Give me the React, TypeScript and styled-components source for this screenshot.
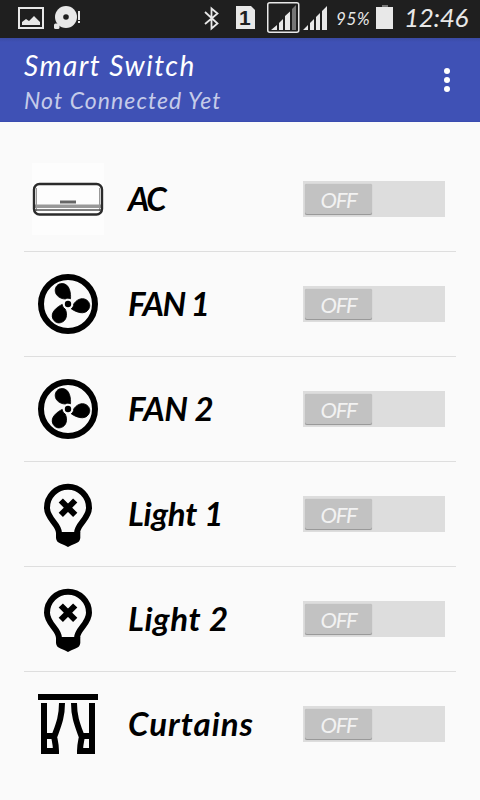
import React from "react";
import styled, { createGlobalStyle } from "styled-components";

const Global = createGlobalStyle`
  * { box-sizing: border-box; }
  body { margin: 0; background: #fafafa; font-family: Lato, "Open Sans", sans-serif; font-style: italic; }
`;

const Screen = styled.div`
  width: 480px;
  height: 800px;
  display: flex;
  flex-direction: column;
  background: #fafafa;
  overflow: hidden;
`;

const StatusBar = styled.header`
  height: 38px;
  flex: none;
  display: flex;
  justify-content: space-between;
  background: #1f1f1f;
  color: #e8e8e8;
  svg { display: block; flex: none; }
`;

const StatusGroup = styled.div`
  display: flex;
`;

const Battery = styled.span`
  width: 40px;
  padding-left: 1px;
  font-size: 17px;
  line-height: 37px;
  letter-spacing: 0.6px;
`;

const Clock = styled.span`
  width: 81px;
  padding-left: 5px;
  font-size: 26px;
  line-height: 34px;
  letter-spacing: -0.3px;
`;

const AppBar = styled.div`
  height: 84px;
  flex: none;
  display: flex;
  justify-content: space-between;
  align-items: center;
  padding: 0 24px;
  background: linear-gradient(#3a4aa4, #3f51b5 4px);
  border-bottom: 1px solid #3a4cb0;
`;

const Titles = styled.div`
  display: flex;
  flex-direction: column;
  padding-top: 5px;
`;

const Title = styled.div`
  font-size: 28px;
  line-height: 36px;
  letter-spacing: 1.5px;
  color: #fff;
`;

const Subtitle = styled.div`
  font-size: 23px;
  line-height: 34px;
  letter-spacing: 1.1px;
  color: #c5cbe9;
`;

const Menu = styled.button`
  display: flex;
  flex-direction: column;
  gap: 3px;
  padding: 0;
  margin-right: 6px;
  border: 0;
  background: none;
`;

const Dot = styled.i`
  width: 6px;
  height: 6px;
  border-radius: 50%;
  background: #fff;
`;

const List = styled.main`
  padding: 25px 24px 0;
`;

const Row = styled.div`
  height: 105px;
  display: flex;
  align-items: center;
  padding: 0 11px 0 8px;
  border-bottom: 1px solid #dedede;
  &:last-child { border-bottom-color: transparent; }
`;

const IconBox = styled.div<{ $plate?: boolean }>`
  width: 72px;
  height: 72px;
  background: ${(p) => (p.$plate ? "#fdfdfd" : "none")};
  svg { display: block; }
`;

const Label = styled.div<{ $spacing: number }>`
  flex: 1;
  padding: 0 0 2px 24px;
  font-size: 33px;
  font-weight: 700;
  line-height: 44px;
  white-space: nowrap;
  letter-spacing: ${(p) => p.$spacing}px;
  color: #000;
`;

const Track = styled.div`
  width: 142px;
  height: 36px;
  padding: 3px 2px;
  background: #ddd;
`;

const Thumb = styled.div`
  width: 67px;
  height: 31px;
  border-radius: 2px;
  background: #c2c2c2;
  box-shadow: inset 0 -1px #999, 0 0 1px #aaa;
  color: #f2f2f2;
  font-size: 22px;
  line-height: 32px;
  text-align: center;
  letter-spacing: -1.3px;
`;

const AcIcon = () => (
  <svg width="72" height="72" fill="none">
    <path d="M4.5 25V48M67.5 25V48" stroke="#999" />
    <path d="M3 43.2H69" stroke="#999" strokeWidth="3.5" />
    <path d="M3 47H69" stroke="#555" strokeWidth="1.3" />
    <path d="M28 39H44" stroke="#666" strokeWidth="3" />
    <rect x="2" y="21" width="68" height="30.5" rx="5.5" stroke="#2b2b2b" strokeWidth="2.4" />
  </svg>
);

const blade =
  "M38.5 30.8C39 26 38 15.5 30 15.5C25.5 15.5 23.2 19 23.2 22.5C23.2 28 29 31 33.2 31C35 30 36.5 30 38.5 30.8Z";

const FanIcon = () => (
  <svg width="72" height="72">
    <circle cx="36" cy="36" r="27" fill="none" stroke="#000" strokeWidth="6" />
    <circle cx="36" cy="36" r="3.2" />
    {[0, 120, 240].map((a) => (
      <path key={a} d={blade} stroke="#000" strokeWidth="0.8" transform={`rotate(${a} 36 36)`} />
    ))}
  </svg>
);

const BulbIcon = () => (
  <svg width="72" height="72" fill="none" stroke="#000" strokeWidth="6">
    <path d="M27 55C27 46 15 41 15 29.7A21 21 0 1 1 57 29.7C57 41 45 46 45 55" />
    <path d="M28.8 22.5L43.2 36.9M43.2 22.5L28.8 36.9" />
    <path d="M24 54H48.3V60Q48 64 43.5 65.5Q39 67 36 69Q33 67 28.5 65.5Q24.3 64 24 60Z" fill="#000" stroke="none" />
  </svg>
);

const curtain = "M12 15V63H24C24 56 22.5 52 22 48H12M30 15C30 29 26.5 37 22.5 48";

const CurtainsIcon = () => (
  <svg width="72" height="72" fill="none" stroke="#000" strokeWidth="6">
    <path d="M6 9H66" />
    <path d={curtain} />
    <path d={curtain} transform="translate(72 0) scale(-1 1)" />
  </svg>
);

const rows = [
  { name: "AC", spacing: -2.4, Icon: AcIcon, plate: true },
  { name: "FAN 1", spacing: -1.3, Icon: FanIcon },
  { name: "FAN 2", spacing: -0.4, Icon: FanIcon },
  { name: "Light 1", spacing: -0.2, Icon: BulbIcon },
  { name: "Light 2", spacing: 0.6, Icon: BulbIcon },
  { name: "Curtains", spacing: 1, Icon: CurtainsIcon },
];

const NoticeIcons = () => (
  <svg width="90" height="38" fill="#e8e8e8">
    <path d="M19 8H43V28H19Z" fill="none" stroke="#e8e8e8" strokeWidth="2" />
    <path d="M22 25V22L26 19L29 21L34 16L40 22V25Z" />
    <circle cx="66" cy="17" r="11" />
    <circle cx="66" cy="17" r="2.8" fill="#1f1f1f" />
    <rect x="54" y="23.500" width="5.500" height="5.500" rx="1.5" />
    <path d="M78 11H80V20H78ZM78 21H80V23H78Z" />
  </svg>
);

const SimDigit = styled.text`
  font: normal 700 21px "Liberation Sans", sans-serif;
  fill: #1f1f1f;
`;

const RadioIcons = () => (
  <svg width="135" height="38" fill="#e8e8e8">
    <path d="M5 12L17.500 23.500L11.500 28.500V8.500L17.500 13.500L5 24" fill="none" stroke="#e8e8e8" strokeWidth="1.8" />
    <path d="M36 6H51L55 10V29H36Z" />
    <SimDigit x="39" y="25">1</SimDigit>
    <rect x="67.750" y="2.750" width="31" height="29.500" rx="2" fill="none" stroke="#e8e8e8" strokeWidth="1.5" />
    <path d="M71 30L77 25V30ZM79 23L83 19V30H79ZM85 16L90 11.500V30H85Z" />
    <path d="M92 9L96 5V30H92Z" fill="#777" />
    <path d="M103 30L108 25V30ZM110 23L114 19V30H110ZM116 17L120 13V30H116ZM122 11L127 6V30H122Z" />
  </svg>
);

const BatteryIcon = () => (
  <svg width="24" height="38" fill="#e8e8e8">
    <path d="M7 5H13V7H7Z" fill="#777" />
    <path d="M1 7H18V29H1Z" />
  </svg>
);

export default function App() {
  return (
    <Screen>
      <Global />
      <StatusBar>
        <NoticeIcons />
        <StatusGroup>
          <RadioIcons />
          <Battery>95%</Battery>
          <BatteryIcon />
          <Clock>12:46</Clock>
        </StatusGroup>
      </StatusBar>
      <AppBar>
        <Titles>
          <Title>Smart Switch</Title>
          <Subtitle>Not Connected Yet</Subtitle>
        </Titles>
        <Menu aria-label="More options">
          <Dot />
          <Dot />
          <Dot />
        </Menu>
      </AppBar>
      <List>
        {rows.map(({ name, spacing, Icon, plate }) => (
          <Row key={name}>
            <IconBox $plate={plate}>
              <Icon />
            </IconBox>
            <Label $spacing={spacing}>{name}</Label>
            <Track>
              <Thumb>OFF</Thumb>
            </Track>
          </Row>
        ))}
      </List>
    </Screen>
  );
}
